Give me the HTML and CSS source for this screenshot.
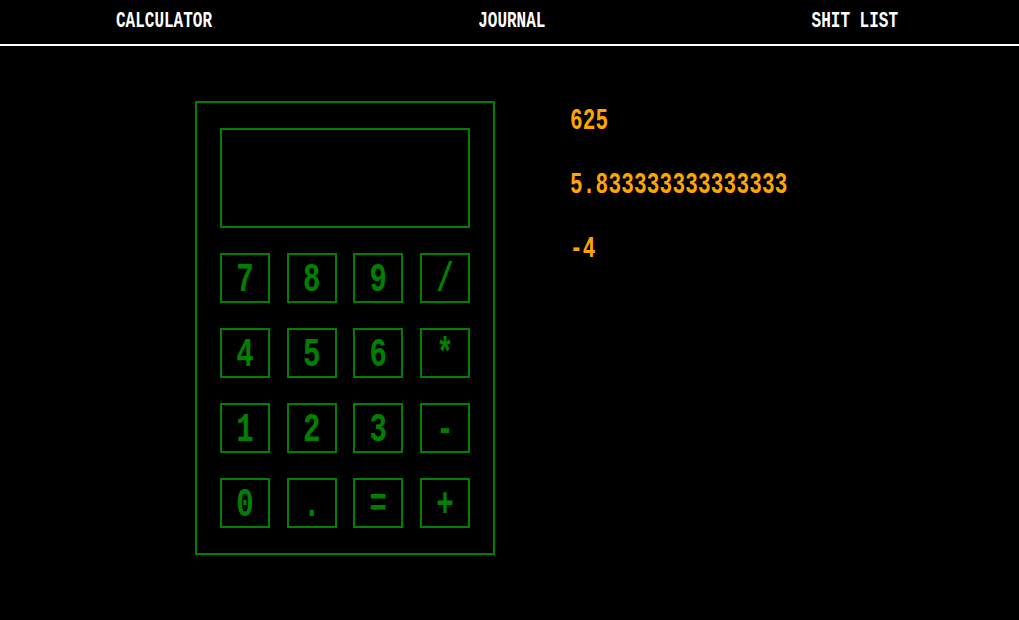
FILE: index.html
```html
<!DOCTYPE html>
<html>
<head>
<meta charset="utf-8">
<link rel="stylesheet" href="styles.css">
</head>
<body>
<nav class="nav">
  <span class="nav-item"><span class="tall">CALCULATOR</span></span>
  <span class="nav-item"><span class="tall">JOURNAL</span></span>
  <span class="nav-item"><span class="tall">SHIT LIST</span></span>
</nav>
<main class="main">
  <div class="calc">
    <div class="display"></div>
    <div class="keys">
      <div class="key"><span class="tall-key">7</span></div>
      <div class="key"><span class="tall-key">8</span></div>
      <div class="key"><span class="tall-key">9</span></div>
      <div class="key"><span class="tall-key">/</span></div>
      <div class="key"><span class="tall-key">4</span></div>
      <div class="key"><span class="tall-key">5</span></div>
      <div class="key"><span class="tall-key">6</span></div>
      <div class="key"><span class="tall-key">*</span></div>
      <div class="key"><span class="tall-key">1</span></div>
      <div class="key"><span class="tall-key">2</span></div>
      <div class="key"><span class="tall-key">3</span></div>
      <div class="key"><span class="tall-key">-</span></div>
      <div class="key"><span class="tall-key">0</span></div>
      <div class="key"><span class="tall-key">.</span></div>
      <div class="key"><span class="tall-key">=</span></div>
      <div class="key"><span class="tall-key">+</span></div>
    </div>
  </div>
  <div class="results">
    <div class="result"><span class="tall-res">625</span></div>
    <div class="result"><span class="tall-res">5.833333333333333</span></div>
    <div class="result"><span class="tall-res">-4</span></div>
  </div>
</main>
</body>
</html>
```

FILE: styles.css
```css
html, body {
  margin: 0;
  padding: 0;
  background: #000;
  width: 1019px;
  height: 620px;
  overflow: hidden;
  font-family: "Liberation Mono", "DejaVu Sans Mono", monospace;
  font-weight: bold;
}

.nav {
  display: flex;
  justify-content: space-between;
  height: 44px;
  padding: 0 121px 0 116px;
  border-bottom: 2px solid #fff;
}

.nav-item {
  color: #fff;
  font-size: 16px;
  line-height: 44px;
  height: 44px;
}

.tall {
  display: inline-block;
  transform: scaleY(1.33);
}

.main {
  display: flex;
  align-items: flex-start;
  padding: 55px 0 0 195px;
  gap: 75px;
}

.calc {
  width: 250px;
  padding: 25px 23px;
  border: 2px solid #008000;
}

.display {
  height: 96px;
  border: 2px solid #008000;
  margin-bottom: 25px;
}

.keys {
  display: grid;
  grid-template-columns: repeat(4, 50px);
  justify-content: space-between;
  row-gap: 25px;
}

.key {
  box-sizing: border-box;
  height: 50px;
  border: 2px solid #008000;
  color: #008000;
  font-size: 29px;
  display: flex;
  align-items: center;
  justify-content: center;
  padding-top: 5px;
}

.tall-key {
  display: inline-block;
  line-height: 1;
  transform: scaleY(1.42);
}

.results {
  display: flex;
  flex-direction: column;
  gap: 34px;
  padding-top: 6px;
}

.result {
  color: #ffa500;
  font-size: 21px;
  letter-spacing: 0.2px;
  line-height: 30px;
  height: 30px;
}

.tall-res {
  display: inline-block;
  transform: scaleY(1.37);
}
```
